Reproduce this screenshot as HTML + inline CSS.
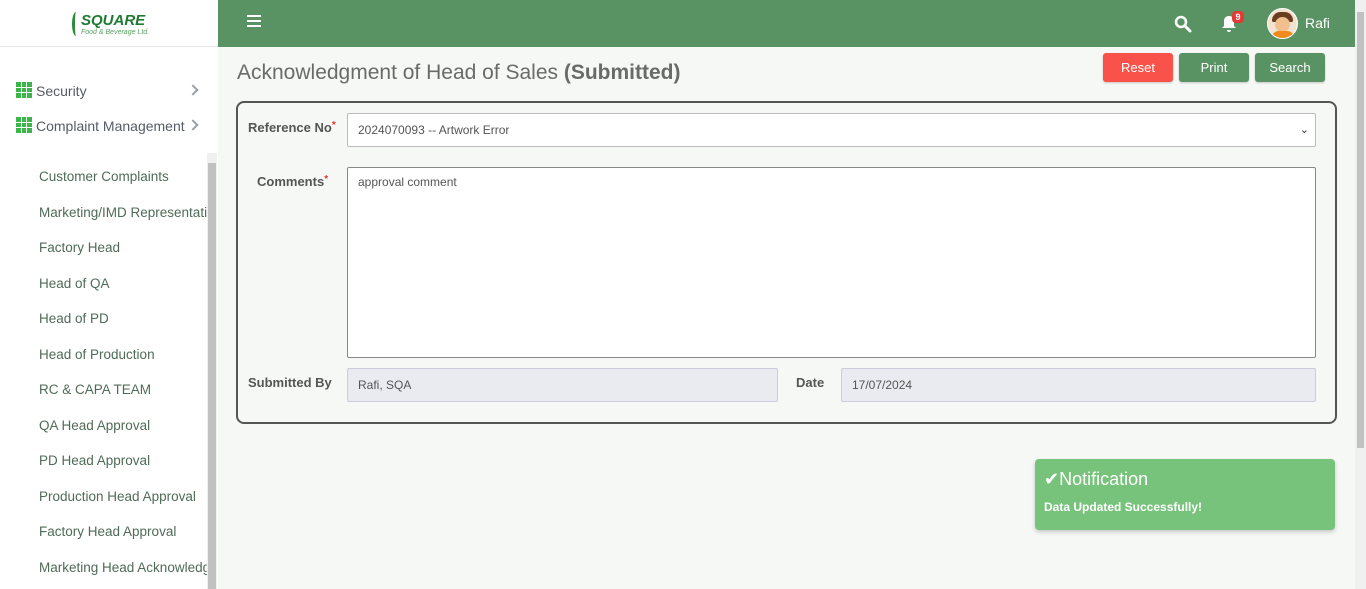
<!DOCTYPE html>
<html><head><style>
*{box-sizing:border-box;margin:0;padding:0}
body{width:1366px;height:589px;overflow:hidden;font-family:"Liberation Sans",sans-serif;background:#f6f8f6;position:relative}
.side{position:absolute;left:0;top:0;width:218px;height:589px;background:#fff}
.logo{height:47px;border-bottom:1px solid #e4e7ea;position:relative}
.menu{position:absolute;left:16px;font-size:14px;color:#555c66}
.grid{display:inline-block;width:16px;height:16px;vertical-align:-2px;margin-right:4px;background:
linear-gradient(90deg,transparent 5px,#fff 5px,#fff 6px,transparent 6px,transparent 10px,#fff 10px,#fff 11px,transparent 11px),
linear-gradient(0deg,transparent 5px,#fff 5px,#fff 6px,transparent 6px,transparent 10px,#fff 10px,#fff 11px,transparent 11px),#3cb54a}
.chev{position:absolute;left:189px;width:8px;height:8px;border-right:2px solid #9aa0a8;border-top:2px solid #9aa0a8;transform:rotate(45deg)}
.sub{position:absolute;left:39px;font-size:13.5px;color:#4f6b57;white-space:nowrap;width:168px;overflow:hidden}
.sb{position:absolute;left:207px;top:153px;width:10px;height:436px;background:#f0f0f0}
.sb div{position:absolute;left:1px;top:10px;width:8px;height:426px;background:#c1c1c1}
.top{position:absolute;left:218px;top:0;width:1137px;height:47px;background:#5a9363}
.vs{position:absolute;right:0;top:0;width:11px;height:589px;background:#f0f0f0}
.vs div{position:absolute;left:2px;top:12px;width:7px;height:436px;background:#c1c1c1}
.btn{position:absolute;top:53px;height:29px;border-radius:3px;color:#fff;font-size:13px;text-align:center;line-height:29px;box-shadow:0 1px 2px rgba(0,0,0,.2)}
.card{position:absolute;left:236px;top:101px;width:1101px;height:323px;border:2px solid #555;border-radius:8px}
.lbl{position:absolute;font-size:13px;font-weight:bold;color:#555}
.lbl i{color:#e33;font-style:normal;font-size:10px;vertical-align:top}
.inp{position:absolute;border:1px solid #bbb;background:#fff;font-size:12px;color:#555;padding-left:10px;border-radius:2px}
.dis{background:#e9ebf1;border-color:#ccd}
</style></head><body>
<div class="side">
<div class="logo">
<div style="position:absolute;left:72px;top:12px;width:8px;height:24px;border-left:3px solid #2e8b3e;border-radius:50% 0 0 50%"></div>
<div style="position:absolute;left:81px;top:12px;font-size:15px;font-weight:bold;font-style:italic;color:#1f7a32">SQUARE</div>
<div style="position:absolute;left:81px;top:29px;font-size:7px;font-style:italic;color:#5aa062">Food &amp; Beverage Ltd.</div>
</div>
<div class="menu" style="top:82px"><span class="grid"></span>Security</div><div class="chev" style="top:86px"></div>
<div class="menu" style="top:117px"><span class="grid"></span>Complaint Management</div><div class="chev" style="top:121px"></div>
<div class="sub" style="top:169px">Customer Complaints</div>
<div class="sub" style="top:205px">Marketing/IMD Representative</div>
<div class="sub" style="top:240px">Factory Head</div>
<div class="sub" style="top:276px">Head of QA</div>
<div class="sub" style="top:311px">Head of PD</div>
<div class="sub" style="top:347px">Head of Production</div>
<div class="sub" style="top:382px">RC &amp; CAPA TEAM</div>
<div class="sub" style="top:418px">QA Head Approval</div>
<div class="sub" style="top:453px">PD Head Approval</div>
<div class="sub" style="top:489px">Production Head Approval</div>
<div class="sub" style="top:524px">Factory Head Approval</div>
<div class="sub" style="top:560px">Marketing Head Acknowledgment</div>
<div class="sb"><div></div></div>
</div>
<div class="top">
<div style="position:absolute;left:29px;top:15px;width:14px;height:2px;background:#fff;box-shadow:0 5px 0 #fff,0 10px 0 #fff"></div>
<svg style="position:absolute;left:956px;top:15px" width="18" height="18" viewBox="0 0 18 18"><circle cx="7" cy="7" r="5" stroke="#fff" stroke-width="2.5" fill="none"/><path d="M11 11l5 5" stroke="#fff" stroke-width="3" stroke-linecap="round"/></svg>
<svg style="position:absolute;left:1003px;top:15px" width="16" height="18" viewBox="0 0 16 18"><path d="M8 1c-3 0-5 2-5 5v5l-2 2h14l-2-2V6c0-3-2-5-5-5z M6 15a2 2 0 0 0 4 0z" fill="#fff"/></svg>
<div style="position:absolute;left:1014px;top:11px;width:12px;height:12px;border-radius:4px;background:#e53935;color:#fff;font-size:9px;text-align:center;line-height:12px;font-weight:bold">9</div>
<div style="position:absolute;left:1049px;top:8px;width:31px;height:31px;border-radius:50%;border:1.5px solid #fff;background:#f2e3cf;overflow:hidden"><div style="position:absolute;left:4px;top:3px;width:21px;height:10px;background:#6b3d20;border-radius:10px 10px 2px 2px"></div><div style="position:absolute;left:7px;top:8px;width:15px;height:15px;background:#f1c08e;border-radius:50%"></div><div style="position:absolute;left:3px;top:22px;width:24px;height:10px;background:#f08a1c;border-radius:8px 8px 0 0"></div></div>
<div style="position:absolute;left:1087px;top:15px;color:#fff;font-size:14px">Rafi</div>
</div>
<div class="vs"><div></div></div>
<div style="position:absolute;left:237px;top:61px;font-size:21px;color:#6a6a6a">Acknowledgment of Head of Sales <b>(Submitted)</b></div>
<div class="btn" style="left:1103px;width:70px;background:#f8524b">Reset</div>
<div class="btn" style="left:1179px;width:70px;background:#5a9363">Print</div>
<div class="btn" style="left:1255px;width:70px;background:#5a9363">Search</div>
<div class="card"></div>
<div class="lbl" style="left:248px;top:120px">Reference No<i>*</i></div>
<div class="inp" style="left:347px;top:113px;width:969px;height:34px;line-height:32px">2024070093 -- Artwork Error<span style="position:absolute;right:6px;top:0;font-size:11px;color:#333">&#8964;</span></div>
<div class="lbl" style="left:257px;top:174px">Comments<i>*</i></div>
<div class="inp" style="left:347px;top:167px;width:969px;height:191px;padding-top:7px;border-color:#888">approval comment</div>
<div class="lbl" style="left:248px;top:375px">Submitted By</div>
<div class="inp dis" style="left:347px;top:368px;width:431px;height:34px;line-height:32px">Rafi, SQA</div>
<div class="lbl" style="left:796px;top:375px">Date</div>
<div class="inp dis" style="left:841px;top:368px;width:475px;height:34px;line-height:32px">17/07/2024</div>
<div style="position:absolute;left:1035px;top:459px;width:300px;height:71px;background:#77c37b;border-radius:4px;box-shadow:0 2px 4px rgba(0,0,0,.2);color:#fff">
<div style="position:absolute;left:9px;top:10px;font-size:18px">&#10004;Notification</div>
<div style="position:absolute;left:9px;top:41px;font-size:12px;font-weight:bold">Data Updated Successfully!</div>
</div>
</body></html>
